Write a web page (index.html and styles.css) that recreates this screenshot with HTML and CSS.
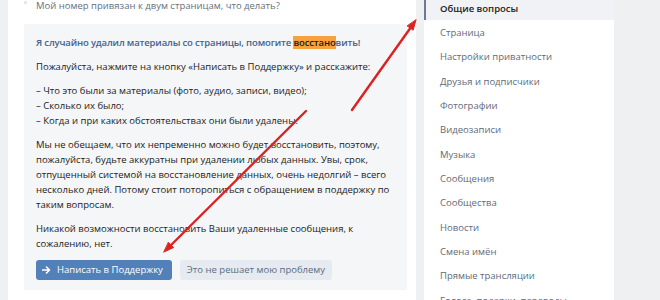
FILE: index.html
```html
<!DOCTYPE html>
<html lang="ru">
<head>
<meta charset="utf-8">
<link rel="stylesheet" href="styles.css">
</head>
<body>
<div class="page">
  <main class="main-card">
    <div class="faq-list">
      <div class="faq-item"><span class="bullet"></span>Мой номер привязан к двум страницам, что делать?</div>
      <div class="faq-open">
        <div class="faq-title">Я случайно удалил материалы со страницы, помогите <mark class="hl">восстано</mark>вить!</div>
        <p>Пожалуйста, нажмите на кнопку «Написать в Поддержку» и расскажите:</p>
        <p>– Что это были за материалы (фото, аудио, записи, видео);<br>– Сколько их было;<br>– Когда и при каких обстоятельствах они были удалены.</p>
        <p>Мы не обещаем, что их непременно можно будет восстановить, поэтому, пожалуйста, будьте аккуратны при удалении любых данных. Увы, срок, отпущенный системой на восстановление данных, очень недолгий – всего несколько дней. Потому стоит поторопиться с обращением в поддержку по таким вопросам.</p>
        <p>Никакой возможности восстановить Ваши удаленные сообщения, к сожалению, нет.</p>
        <div class="actions">
          <button class="btn btn-primary"><svg class="btn-icon" width="9" height="8" viewBox="0 0 9 8"><path d="M0.5 4H7.5M4.5 1L7.5 4L4.5 7" fill="none" stroke="#fff" stroke-width="1.6" stroke-linecap="round" stroke-linejoin="round"/></svg>Написать в Поддержку</button>
          <button class="btn btn-secondary">Это не решает мою проблему</button>
        </div>
      </div>
    </div>
  </main>
  <aside class="side-card">
    <ul class="menu">
      <li class="menu-item active">Общие вопросы</li>
      <li class="menu-item">Страница</li>
      <li class="menu-item">Настройки приватности</li>
      <li class="menu-item">Друзья и подписчики</li>
      <li class="menu-item">Фотографии</li>
      <li class="menu-item">Видеозаписи</li>
      <li class="menu-item">Музыка</li>
      <li class="menu-item">Сообщения</li>
      <li class="menu-item">Сообщества</li>
      <li class="menu-item">Новости</li>
      <li class="menu-item">Смена имён</li>
      <li class="menu-item">Прямые трансляции</li>
      <li class="menu-item">Голоса, подарки, переводы</li>
    </ul>
  </aside>
</div>
<svg class="annotations" width="660" height="300" viewBox="0 0 660 300">
  <g stroke="#d92323" stroke-width="2.4" stroke-linecap="round" fill="#d92323">
    <line x1="352" y1="110" x2="410.2" y2="28.2"/>
    <polygon points="416,20 413.1,30.2 407.4,26.1" stroke-width="1"/>
    <line x1="306" y1="111" x2="171.1" y2="245"/>
    <polygon points="164,252 173.6,247.5 168.6,242.5" stroke-width="1"/>
  </g>
</svg>
</body>
</html>
```

FILE: styles.css
```css
* { box-sizing: border-box; }
html, body { margin: 0; padding: 0; }
body {
  width: 660px;
  height: 300px;
  overflow: hidden;
  background: #eef0f2;
  font-family: "Open Sans", "Liberation Sans", sans-serif;
  font-size: 9.5px;
  color: #222;
  position: relative;
}
.page {
  display: flex;
  gap: 8px;
  padding: 0 8px;
  height: 300px;
}
.main-card {
  width: 408px;
  background: #fff;
  padding: 0 9px 0 16px;
}
.faq-list { margin-top: -12px; }
.faq-item {
  padding: 10px 0 11px 12px;
  line-height: 15px;
  color: #656f7c;
  position: relative;
}
.bullet {
  position: absolute;
  left: 0;
  top: 13px;
  width: 3px;
  height: 3px;
  border-radius: 50%;
  background: #dde1e6;
}
.faq-open {
  background: #f5f6f8;
  padding: 11px 12px 10px;
  line-height: 15px;
}
.faq-title {
  font-weight: 600;
  color: #41638e;
  margin-bottom: 9px;
  letter-spacing: -0.15px;
}
.hl {
  background: #f7a23f;
  color: #1b1b1b;
  padding: 0;
}
.faq-open p {
  margin: 0 0 9px;
}
.actions {
  display: flex;
  gap: 8px;
  margin-top: 5px;
}
.btn {
  font-family: inherit;
  font-size: 9.5px;
  height: 20px;
  border: 0;
  border-radius: 3px;
  padding: 0 9px;
  display: flex;
  align-items: center;
  white-space: nowrap;
  line-height: 20px;
}
.btn-primary {
  background: #5181b8;
  color: #fff;
  padding-left: 6px;
}
.btn-icon { margin-right: 6px; }
.btn-secondary {
  background: #e6ebf1;
  color: #5b6c80;
  padding: 0 7px;
}
.side-card {
  width: 190px;
  background: #fff;
}
.menu {
  list-style: none;
  margin: -4px 0 0;
  padding: 0;
}
.menu-item {
  height: 24.33px;
  display: flex;
  align-items: center;
  padding-left: 16px;
  color: #5f6a78;
}
.menu-item.active {
  background: #f0f2f5;
  border-left: 2px solid #6a7a8f;
  padding-left: 14px;
  font-weight: 600;
  color: #222;
}
.annotations {
  position: absolute;
  left: 0;
  top: 0;
  pointer-events: none;
}
```
